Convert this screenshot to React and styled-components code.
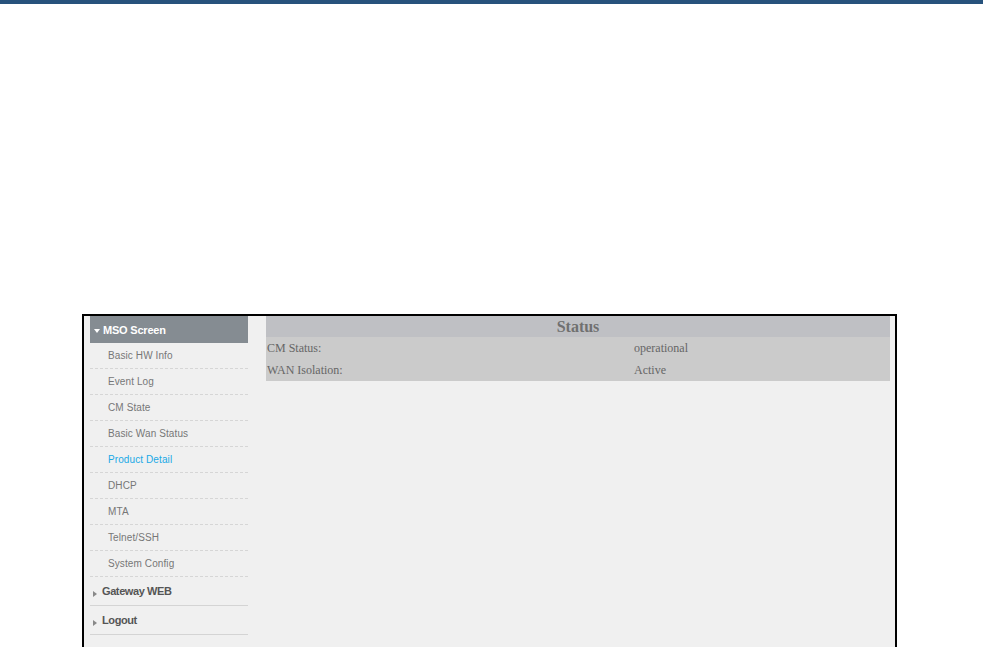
import styled, { createGlobalStyle } from "styled-components";

const GlobalStyle = createGlobalStyle`
  html, body {
    margin: 0;
    padding: 0;
    background: #fff;
    font-family: "Liberation Sans", Arial, sans-serif;
  }
`;

const TopBar = styled.div`
  height: 4px;
  width: 983px;
  background-color: #27527c;
`;

const Page = styled.div`
  padding: 310px 0 0 82px;
`;

const Frame = styled.div`
  box-sizing: border-box;
  width: 815px;
  height: 333px;
  border: 2px solid #000;
  border-bottom: none;
  background-color: #f0f0f0;
  display: flex;
  padding-left: 6px;
`;

const Sidebar = styled.div`
  width: 158px;
  flex-shrink: 0;
  display: flex;
  flex-direction: column;
`;

const MenuHead = styled.div`
  display: flex;
  align-items: center;
  gap: 3px;
  padding-left: 3px;
  background-color: ${({ open }) => (open ? "#858c92" : "transparent")};
  color: ${({ open }) => (open ? "#fff" : "#555")};
  font-size: 11px;
  font-weight: 700;
  letter-spacing: ${({ open }) => (open ? "-0.2px" : "-0.4px")};
  border-bottom: ${({ open }) => (open ? "none" : "1px solid #d4d4d4")};
  height: ${({ open }) => (open ? "27px" : "28px")};
`;

const Arrow = styled.span`
  width: 0;
  height: 0;
  ${({ open }) =>
    open
      ? `border-left: 3px solid transparent;
         border-right: 3px solid transparent;
         border-top: 4px solid #fff;
         margin: 3px 0 0 1px;`
      : `border-top: 3px solid transparent;
         border-bottom: 3px solid transparent;
         border-left: 4px solid #888;
         margin: 5px 2px 0 0;`}
`;

const SubItem = styled.div`
  height: 25px;
  display: flex;
  align-items: center;
  padding-left: 18px;
  font-size: 10px;
  letter-spacing: 0.1px;
  color: ${({ active }) => (active ? "#1aa9e6" : "#777")};
  border-bottom: 1px dashed #d6d6d6;
`;

const Content = styled.div`
  flex: 1;
  padding: 0 5px 0 18px;
`;

const StatusTable = styled.div`
  font-family: "Liberation Serif", "Times New Roman", serif;
  color: #666;
`;

const TableHead = styled.div`
  height: 21px;
  background-color: #bfc0c4;
  display: flex;
  align-items: center;
  justify-content: center;
  font-size: 16px;
  font-weight: 700;
  color: #707070;
`;

const Row = styled.div`
  height: 22px;
  background-color: #cbcbcb;
  display: grid;
  grid-template-columns: 367px 1fr;
  align-items: center;
  font-size: 12px;
  padding-left: 1px;
`;

const subItems = [
  "Basic HW Info",
  "Event Log",
  "CM State",
  "Basic Wan Status",
  "Product Detail",
  "DHCP",
  "MTA",
  "Telnet/SSH",
  "System Config",
];

const rows = [
  ["CM Status:", "operational"],
  ["WAN Isolation:", "Active"],
];

export default function App() {
  return (
    <>
      <GlobalStyle />
      <TopBar />
      <Page>
        <Frame>
          <Sidebar>
            <MenuHead open>
              <Arrow open />
              MSO Screen
            </MenuHead>
            {subItems.map((item) => (
              <SubItem key={item} active={item === "Product Detail"}>
                {item}
              </SubItem>
            ))}
            <MenuHead>
              <Arrow />
              Gateway WEB
            </MenuHead>
            <MenuHead>
              <Arrow />
              Logout
            </MenuHead>
          </Sidebar>
          <Content>
            <StatusTable>
              <TableHead>Status</TableHead>
              {rows.map(([label, value]) => (
                <Row key={label}>
                  <span>{label}</span>
                  <span>{value}</span>
                </Row>
              ))}
            </StatusTable>
          </Content>
        </Frame>
      </Page>
    </>
  );
}
